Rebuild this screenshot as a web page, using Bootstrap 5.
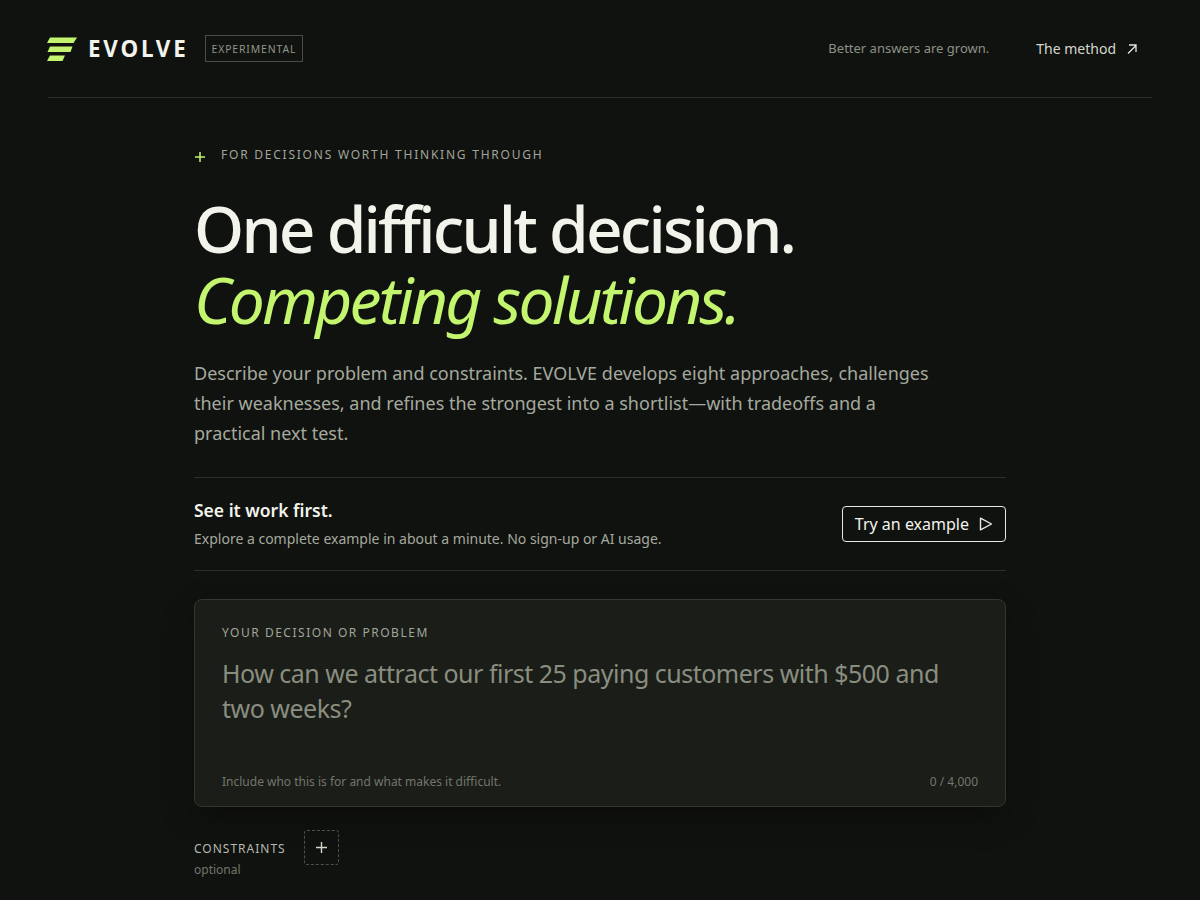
<!DOCTYPE html>
<html lang="en">
<head>
<meta charset="utf-8">
<title>EVOLVE</title>
<link href="https://cdn.jsdelivr.net/npm/bootstrap@5.3.0/dist/css/bootstrap.min.css" rel="stylesheet">
<style>
html,body{height:900px;overflow:hidden}
body{background:#10120f;font-family:"Noto Sans",sans-serif;color:#f2f4ec}
.topbar{margin:0 48px;height:98px;border-bottom:1px solid #2c2f29}
.logo-mark{margin-left:-1px;margin-right:11px}
.wordmark{font-size:22.4px;font-weight:700;letter-spacing:2.8px;line-height:30px;color:#f2f4ec}
.exp-tag{font-size:10.4px;letter-spacing:.88px;line-height:14px;padding:5.5px 6px;border:1px solid #4a4d45;color:#92968b;margin-left:16px}
.tagline{font-size:13px;color:#8d9187}
.method{font-size:14px;color:#d4d7ce;text-decoration:none;margin-left:47px;margin-right:15px}
.method svg{margin-left:11px}
.mainwrap{width:812px;margin:0 auto}
.eyebrow{font-size:12px;letter-spacing:1.77px;color:#a1a59a;margin-top:47px;line-height:20px}
.eyebrow svg{margin-right:15px;margin-top:6px}
.headline{font-size:64px;font-weight:500;line-height:71px;letter-spacing:-2.76px;margin:28px 0 0;color:#f2f4ec}
.headline em{color:#c4f56f;font-style:italic;font-weight:400;display:block}
.intro{font-size:18px;line-height:30px;color:#a5a99e;margin:23px 0 0;width:740px}
.demo{margin-top:29px;border-top:1px solid #2c2f29;border-bottom:1px solid #2c2f29;height:94px}
.demo-title{font-size:17.5px;font-weight:600;line-height:24px;color:#f2f4ec;margin-top:-1px}
.demo-sub{font-size:14px;line-height:20px;color:#a5a99e;margin-top:7px}
.try-btn{font-size:16px;line-height:24px;color:#f2f4ec;border:1px solid #e8ebe2;border-radius:4px;background:transparent;padding:5px 12px;--bs-btn-hover-color:#f2f4ec}
.try-ico{margin-left:10px}
.prob{margin-top:28px;height:208px;background:#1b1d18;border:1px solid #35382f;border-radius:8px;padding:24px 27px 0;box-shadow:0 12px 32px rgba(0,0,0,.25)}
.prob-label{font-size:12px;letter-spacing:1.52px;line-height:18px;color:#a1a59a}
.prob-input{font-size:25px;line-height:35px;letter-spacing:-.5px;color:#8a8e80;margin-top:14px;height:112px}
.prob-foot{font-size:12px;line-height:18px;color:#72766b;margin-top:5px}
.cons{margin-top:23px}
.cons-label{font-size:12px;letter-spacing:1px;line-height:18px;color:#b6baae;margin-top:10px}
.cons-opt{font-size:12px;line-height:18px;color:#72766b;margin-top:3px}
.add-box{width:35px;height:35px;border:1px dashed #4f5249;border-radius:3px;margin-left:18px;background:transparent;padding:0}
</style>
</head>
<body>
<header class="topbar d-flex align-items-center justify-content-between">
  <div class="d-flex align-items-center">
    <svg class="logo-mark" width="30" height="24" viewBox="0 0 30 24" aria-hidden="true"><g fill="#c4f56f"><polygon points="3,0.500 30,0.500 26.500,6 0,6"/><polygon points="3,9.500 25.500,9.500 23.500,15 0.500,15"/><polygon points="3,18.500 18,18.500 15.500,24 0,24"/></g></svg>
    <span class="wordmark">EVOLVE</span>
    <span class="exp-tag">EXPERIMENTAL</span>
  </div>
  <div class="d-flex align-items-center">
    <span class="tagline">Better answers are grown.</span>
    <a class="method d-flex align-items-center" href="#">The method<svg width="10" height="10" viewBox="0 0 10 10" fill="none" stroke="#e3e6dc" stroke-width="1.300"><path d="M1 9.500 9 1.500M2 1H9V8"/></svg></a>
  </div>
</header>
<main class="mainwrap">
  <div class="eyebrow d-flex align-items-start">
    <svg width="12" height="12" viewBox="0 0 12 12" stroke="#c4f56f" stroke-width="1.500"><path d="M6 1v10M1 6h10"/></svg>
    <span>FOR DECISIONS WORTH THINKING THROUGH</span>
  </div>
  <h1 class="headline">One difficult decision.<em>Competing solutions.</em></h1>
  <p class="intro">Describe your problem and constraints. EVOLVE develops eight approaches, challenges their weaknesses, and refines the strongest into a shortlist—with tradeoffs and a practical next test.</p>
  <section class="demo d-flex align-items-center justify-content-between">
    <div>
      <div class="demo-title">See it work first.</div>
      <div class="demo-sub">Explore a complete example in about a minute. No sign-up or AI usage.</div>
    </div>
    <button type="button" class="btn try-btn d-flex align-items-center">Try an example<svg width="14" height="14" viewBox="0 0 14 14" fill="none" stroke="#e8ebe2" stroke-width="1.400" class="try-ico"><path d="M1.500 1.200 12.500 7 1.500 12.800Z" stroke-linejoin="round"/></svg></button>
  </section>
  <section class="prob">
    <div class="prob-label">YOUR DECISION OR PROBLEM</div>
    <div class="prob-input">How can we attract our first 25 paying customers with $500 and two weeks?</div>
    <div class="prob-foot d-flex justify-content-between"><span>Include who this is for and what makes it difficult.</span><span>0 / 4,000</span></div>
  </section>
  <section class="cons d-flex align-items-start">
    <div>
      <div class="cons-label">CONSTRAINTS</div>
      <div class="cons-opt">optional</div>
    </div>
    <button type="button" class="add-box d-flex align-items-center justify-content-center" aria-label="Add constraint"><svg width="11" height="11" viewBox="0 0 11 11" stroke="#d4d7c8" stroke-width="1.400"><path d="M5.500 0v11M0 5.500h11"/></svg></button>
  </section>
</main>
<script src="https://cdn.jsdelivr.net/npm/bootstrap@5.3.0/dist/js/bootstrap.bundle.min.js"></script>
</body>
</html>
